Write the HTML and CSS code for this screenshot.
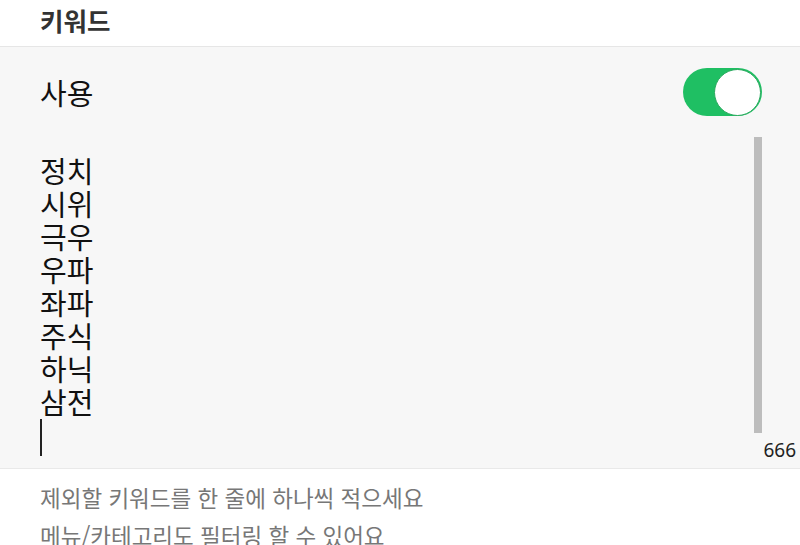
FILE: index.html
```html
<!DOCTYPE html>
<html lang="ko">
<head>
<meta charset="utf-8">
<link rel="stylesheet" href="styles.css">
</head>
<body>
<div class="page">
  <header class="header">키워드</header>
  <section class="panel">
    <div class="row">
      <span class="row-label">사용</span>
      <div class="toggle"><div class="knob"></div></div>
    </div>
    <div class="editor">
      <div class="lines">
        <div>정치</div>
        <div>시위</div>
        <div>극우</div>
        <div>우파</div>
        <div>좌파</div>
        <div>주식</div>
        <div>하닉</div>
        <div>삼전</div>
        <div class="caret"></div>
      </div>
      <div class="scrollbar"></div>
      <div class="counter">666</div>
    </div>
  </section>
  <section class="help">
    <p>제외할 키워드를 한 줄에 하나씩 적으세요</p>
    <p>메뉴/카테고리도 필터링 할 수 있어요</p>
  </section>
</div>
</body>
</html>
```
FILE: styles.css
```css
html, body {
  margin: 0;
  padding: 0;
  background: #ffffff;
}
body {
  font-family: "Noto Sans CJK KR", "Noto Sans", sans-serif;
  width: 800px;
  height: 545px;
  overflow: hidden;
}
.page {
  display: flex;
  flex-direction: column;
}
.header {
  height: 47px;
  box-sizing: border-box;
  padding: 0 40px;
  font-size: 25.5px;
  font-weight: 700;
  color: #333333;
  line-height: 40px;
  border-bottom: 1px solid #e6e6e6;
}
.panel {
  background: #f7f7f7;
  border-bottom: 1px solid #e9e9e9;
}
.row {
  height: 90px;
  display: flex;
  align-items: center;
  justify-content: space-between;
  padding: 0 38px 0 40px;
}
.row-label {
  font-size: 29px;
  color: #111111;
}
.toggle {
  width: 79px;
  height: 48px;
  border-radius: 24px;
  background: #1fbf63;
  display: flex;
  justify-content: flex-end;
  align-items: center;
  padding: 0 1px 0 0;
  box-sizing: border-box;
}
.knob {
  width: 47px;
  height: 47px;
  box-sizing: border-box;
  border-radius: 50%;
  background: #ffffff;
  border: 1.5px solid #2aa95e;
}
.editor {
  position: relative;
  height: 331px;
  padding: 17px 40px 0 40px;
  box-sizing: border-box;
}
.lines {
  font-size: 29px;
  line-height: 33px;
  color: #111111;
}
.caret {
  width: 2px;
  height: 37px;
  margin-top: 1px;
  background: #222222;
}
.scrollbar {
  position: absolute;
  top: 0;
  right: 38px;
  width: 8px;
  height: 296px;
  background: #bdbdbd;
}
.counter {
  position: absolute;
  right: 4px;
  bottom: 6px;
  font-family: "Noto Sans", sans-serif;
  font-size: 19px;
  line-height: 24px;
  color: #222222;
}
.help {
  padding: 9px 40px 0 40px;
}
.help p {
  margin: 0;
  font-size: 22.5px;
  line-height: 38px;
  color: #777777;
}
```
